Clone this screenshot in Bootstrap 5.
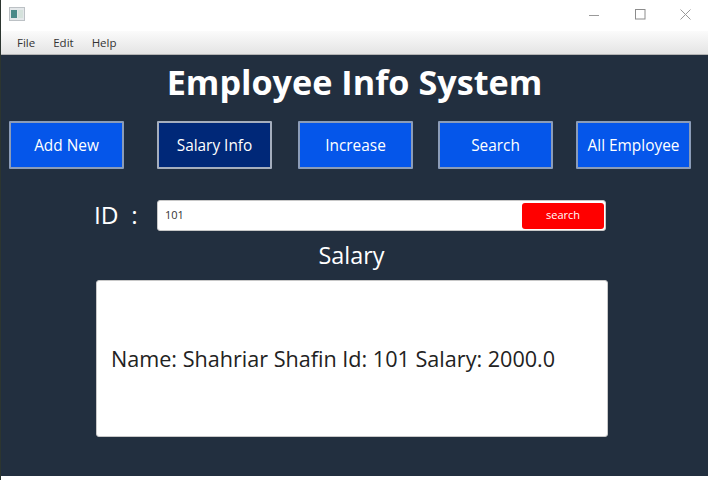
<!DOCTYPE html>
<html lang="en">
<head>
<meta charset="utf-8">
<title>Employee Info System</title>
<link rel="stylesheet" href="https://cdn.jsdelivr.net/npm/bootstrap@5.3.0/dist/css/bootstrap.min.css">
<style>
html,body{height:100%;overflow:hidden;background:#fff;}
body{font-family:"Open Sans","Noto Sans","Liberation Sans",sans-serif;border-left:1px solid #2c3530;}
.win-title{height:31px;background:#fff;padding:0 17px 3px 8px;}
.win-ctrl{gap:34.5px;}
.menu-strip{height:24px;padding-left:16px;gap:18px;font-size:11.5px;color:#333;background:linear-gradient(#fbfbfb,#e4e4e4);border-bottom:1px solid #b4b4b4;}
.app-body{height:421px;background:#222f3f;}
.app-title{font-size:34.2px;font-weight:700;color:#fff;line-height:48px;height:66px;padding-top:3px;text-align:center;margin:0;}
.nav-row{padding-left:8px;height:48px;}
.nav-btn{width:115px;height:48px;border-radius:1px;border:2px solid #8b9cb8;background:#0556ea;color:#fff;font-size:15.4px;padding:2px 0 0;}
.nav-btn:hover{background:#0556ea;color:#fff;border-color:#8b9cb8;}
.nav-btn.is-dark{background:#002878;border-color:#a5aebd;}
.ml-a{margin-left:33px;}.ml-b{margin-left:26px;}.ml-c{margin-left:25px;}.ml-d{margin-left:23px;}
.id-row{margin-top:31px;height:31px;padding-left:93px;}
.id-label{width:63px;color:#fff;font-size:24.5px;font-weight:400;line-height:30px;white-space:pre;}
.search-box{width:449px;height:31px;background:#fff;border:1px solid #c8c8c8;border-radius:3px;padding:2px 1px 2px 7px;font-size:11px;color:#333;}
.search-btn{width:82px;height:26px;background:#f00;border:0;border-radius:3px;color:#fff;font-size:11px;padding:0;}
.search-btn:hover{background:#f00;color:#fff;}
.salary-head{color:#fff;font-size:23.4px;font-weight:400;line-height:32px;margin-top:8px;height:33px;text-align:center;padding-right:6px;}
.result-box{width:512px;height:157px;margin-left:95px;margin-top:8px;background:#fff;border:1px solid #c8c8c8;border-radius:3px;padding-left:14px;padding-top:2px;font-size:21.6px;color:#222;}
</style>
</head>
<body>
<div class="win-title d-flex align-items-center justify-content-between">
  <svg width="16" height="14" viewBox="0 0 16 14"><rect x=".5" y=".5" width="15" height="13" fill="#e4e8ea" stroke="#bcc1c5"/><rect x="2" y="3" width="6" height="8" fill="#4a8a88"/><rect x="9" y="3" width="5" height="8" fill="#d5e2dc"/></svg>
  <div class="win-ctrl d-flex align-items-center">
    <svg width="11" height="11" viewBox="0 0 11 11"><path d="M0 6.500h10" stroke="#9a9a9a" fill="none"/></svg>
    <svg width="11" height="11" viewBox="0 0 11 11"><rect x=".5" y=".5" width="9.500" height="9.500" stroke="#8c8c8c" fill="none"/></svg>
    <svg width="11" height="11" viewBox="0 0 11 11"><path d="M.5.5l10 10M10.500.5l-10 10" stroke="#9a9a9a" fill="none"/></svg>
  </div>
</div>
<div class="menu-strip d-flex align-items-center"><span>File</span><span>Edit</span><span>Help</span></div>
<main class="app-body">
  <h1 class="app-title">Employee Info System</h1>
  <div class="nav-row d-flex">
    <button class="btn nav-btn">Add New</button>
    <button class="btn nav-btn is-dark ml-a">Salary Info</button>
    <button class="btn nav-btn ml-b">Increase</button>
    <button class="btn nav-btn ml-c">Search</button>
    <button class="btn nav-btn ml-d">All Employee</button>
  </div>
  <div class="id-row d-flex">
    <div class="id-label">ID  :</div>
    <div class="search-box d-flex align-items-center justify-content-between"><span>101</span><button class="btn search-btn">search</button></div>
  </div>
  <div class="salary-head">Salary</div>
  <div class="result-box d-flex align-items-center">Name: Shahriar Shafin Id: 101 Salary: 2000.0</div>
</main>
</body>
</html>
